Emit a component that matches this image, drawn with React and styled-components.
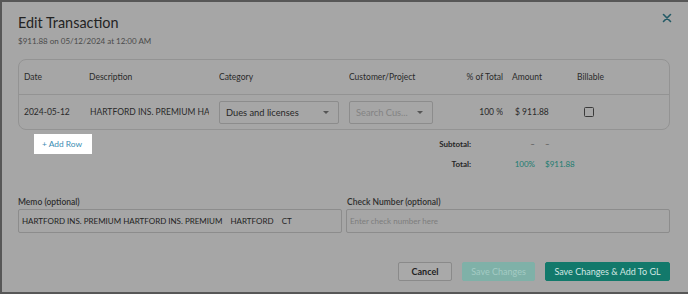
import React from 'react';
import styled, { createGlobalStyle } from 'styled-components';

const GlobalStyle = createGlobalStyle`
  * { box-sizing: border-box; }
  body {
    margin: 0;
    background: #595959;
    font-family: Lato, "Open Sans", Arial, sans-serif;
  }
`;

const Modal = styled.div`
  width: 688px;
  height: 294px;
  background: #a6a6a6;
  border-top: 2px solid #575757;
  border-left: 2px solid #575757;
  border-bottom: 2px solid #575757;
  padding: 0 18px 0 16px;
  display: flex;
  flex-direction: column;
  color: #222;
`;

const Header = styled.div`
  display: flex;
  justify-content: space-between;
  align-items: flex-start;
  padding-top: 11px;
`;

const Title = styled.h1`
  margin: 0;
  font-size: 14.4px;
  line-height: 20px;
  font-weight: 400;
  color: #232323;
`;

const Subtitle = styled.p`
  margin: 3px 0 0;
  font-size: 8px;
  line-height: 11px;
  color: #4a4a4a;
`;

const CloseButton = styled.button`
  border: 0;
  background: none;
  padding: 0;
  margin: 0 -2px 0 0;
  width: 10px;
  height: 10px;
  display: flex;
  cursor: pointer;
`;

const Card = styled.div`
  margin-top: 12px;
  border: 1px solid #939393;
  border-radius: 8px;
`;

const Row = styled.div`
  display: grid;
  grid-template-columns: 65px 130px 130px 100px 54px 74px 1fr;
  align-items: center;
  height: ${(p) => p.h}px;
  padding-left: 5px;
  border-top: ${(p) => (p.divided ? '1px solid #939393' : 'none')};
  font-size: 8.5px;
  color: #2a2a2a;
`;

const Cell = styled.div`
  white-space: nowrap;
  overflow: hidden;
  text-align: ${(p) => (p.right ? 'right' : 'left')};
  padding-left: ${(p) => p.pl || 0}px;
  margin-right: ${(p) => p.mr || 0}px;
`;

const Select = styled.div`
  width: ${(p) => p.w}px;
  height: 23px;
  border: 1px solid #8c8c8c;
  border-radius: 2px;
  display: flex;
  align-items: center;
  justify-content: space-between;
  padding: 0 9px 0 6px;
  font-size: 9.3px;
  color: ${(p) => (p.placeholder ? '#838383' : '#262626')};
`;

const Caret = styled.span`
  width: 0;
  height: 0;
  border-left: 3px solid transparent;
  border-right: 3px solid transparent;
  border-top: 3.5px solid #555;
`;

const Checkbox = styled.span`
  display: block;
  width: 10px;
  height: 10px;
  margin-left: 7px;
  border: 1.3px solid #3a3a3a;
  border-radius: 1.5px;
`;

const Below = styled.div`
  display: flex;
  align-items: flex-start;
  margin-top: 4px;
`;

const AddRow = styled.button`
  margin-left: 16px;
  width: 58px;
  height: 20px;
  border: 0;
  background: #fff;
  color: #3b8db3;
  font-family: inherit;
  font-size: 8.4px;
  text-align: left;
  padding: 0 0 0 8px;
`;

const Totals = styled.div`
  margin-left: auto;
  margin-right: 95px;
  display: grid;
  grid-template-columns: 60px 64px 40px;
  grid-auto-rows: 20px;
  align-items: center;
  font-size: 8px;
`;

const TotalLabel = styled.span`
  text-align: right;
  font-weight: 700;
  color: #262626;
`;

const TotalValue = styled.span`
  text-align: ${(p) => (p.right ? 'right' : 'left')};
  padding-left: ${(p) => (p.right ? 0 : 10)}px;
  color: ${(p) => (p.accent ? '#1b7c70' : '#444')};
`;

const Fields = styled.div`
  display: grid;
  grid-template-columns: 324px 324px;
  column-gap: 4px;
  margin-top: 23px;
`;

const Field = styled.label`
  display: flex;
  flex-direction: column;
  gap: 2px;
`;

const FieldLabel = styled.span`
  font-size: 8.5px;
  line-height: 10px;
  font-weight: 600;
  color: #2e2e2e;
  padding-left: ${(p) => p.pl || 0}px;
`;

const Input = styled.input`
  height: 24px;
  border: 1px solid #8c8c8c;
  border-radius: 2px;
  background: #a6a6a6;
  padding: 0 3px;
  font-family: inherit;
  font-size: 8px;
  color: #232323;
  outline: none;
  &::placeholder { color: #7d7d7d; }
`;

const Actions = styled.div`
  display: flex;
  justify-content: flex-end;
  gap: 10px;
  margin-top: 29px;
`;

const Button = styled.button`
  height: 19px;
  width: ${(p) => p.w}px;
  border-radius: 2px;
  border: 1px solid ${(p) => p.border};
  background: ${(p) => p.bg};
  color: ${(p) => p.color};
  font-family: inherit;
  font-size: 9px;
  font-weight: ${(p) => p.fw || 400};
  padding: 0;
`;

export default function App() {
  return (
    <>
      <GlobalStyle />
      <Modal>
        <Header>
          <div>
            <Title>Edit Transaction</Title>
            <Subtitle>$911.88 on 05/12/2024 at 12:00 AM</Subtitle>
          </div>
          <CloseButton aria-label="Close">
            <svg width="10" height="10" viewBox="0 0 10 10">
              <path d="M1.5 1.5 L8.5 8.5 M8.5 1.5 L1.5 8.5" stroke="#235a66" strokeWidth="1.6" strokeLinecap="round" />
            </svg>
          </CloseButton>
        </Header>

        <Card>
          <Row h={34}>
            <Cell>Date</Cell>
            <Cell>Description</Cell>
            <Cell>Category</Cell>
            <Cell>Customer/Project</Cell>
            <Cell right>% of Total</Cell>
            <Cell pl={9}>Amount</Cell>
            <Cell>Billable</Cell>
          </Row>
          <Row h={35} divided>
            <Cell>2024-05-12</Cell>
            <Cell pl={1} mr={10}>HARTFORD INS. PREMIUM HARTFORD</Cell>
            <Cell>
              <Select w={120}>Dues and licenses<Caret /></Select>
            </Cell>
            <Cell>
              <Select w={84} placeholder>Search Cus...<Caret /></Select>
            </Cell>
            <Cell right>100 %</Cell>
            <Cell pl={12}>$ 911.88</Cell>
            <Cell><Checkbox /></Cell>
          </Row>
        </Card>

        <Below>
          <AddRow>+ Add Row</AddRow>
          <Totals>
            <TotalLabel>Subtotal:</TotalLabel>
            <TotalValue right>–</TotalValue>
            <TotalValue>–</TotalValue>
            <TotalLabel>Total:</TotalLabel>
            <TotalValue right accent>100%</TotalValue>
            <TotalValue accent>$911.88</TotalValue>
          </Totals>
        </Below>

        <Fields>
          <Field>
            <FieldLabel>Memo (optional)</FieldLabel>
            <Input readOnly value="HARTFORD INS. PREMIUM HARTFORD INS. PREMIUM    HARTFORD    CT" />
          </Field>
          <Field>
            <FieldLabel pl={1}>Check Number (optional)</FieldLabel>
            <Input placeholder="Enter check number here" />
          </Field>
        </Fields>

        <Actions>
          <Button w={54} bg="#a9a9a9" border="#8a8a8a" color="#222" fw={700}>Cancel</Button>
          <Button w={73} bg="#7fb1a8" border="#7fb1a8" color="#a4cbc4">Save Changes</Button>
          <Button w={125} bg="#12796b" border="#12796b" color="#d3e7e3">Save Changes &amp; Add To GL</Button>
        </Actions>
      </Modal>
    </>
  );
}
